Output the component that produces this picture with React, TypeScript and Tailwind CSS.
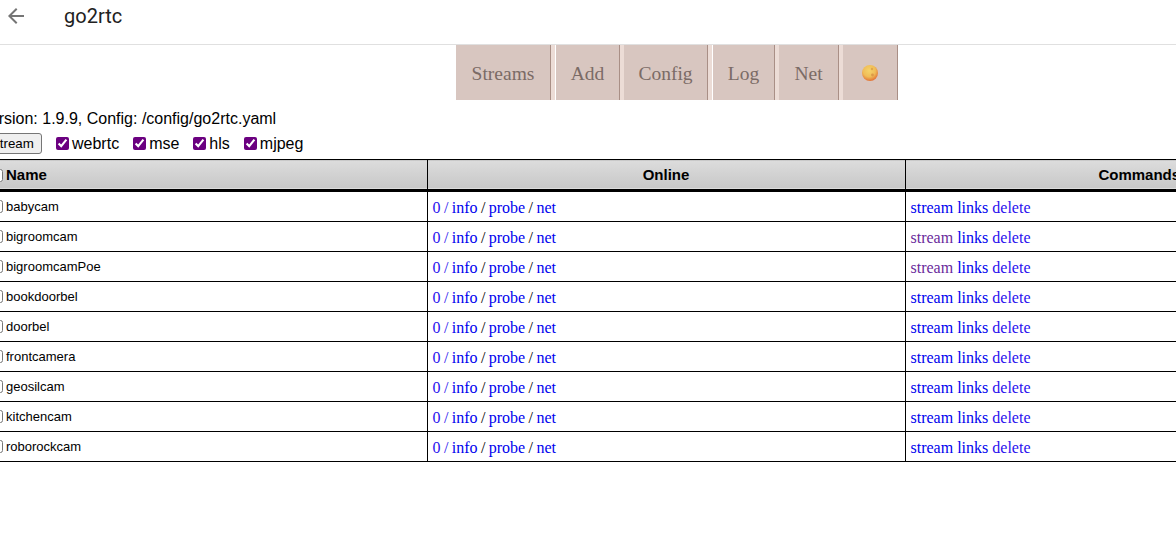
import React from "react";

const streams = ["babycam","bigroomcam","bigroomcamPoe","bookdoorbel","doorbel","frontcamera","geosilcam","kitchencam","roborockcam"];
const tabs = [
  { label: "Streams", cls: "w-[95px] mr-[5px]" },
  { label: "Add", cls: "w-[64px] mr-[4px]" },
  { label: "Config", cls: "w-[84px] mr-[5px]" },
  { label: "Log", cls: "w-[62px] mr-[4px]" },
  { label: "Net", cls: "w-[60px] mr-[4px]" },
];

function Moon() {
  return (
    <svg width="18" height="18" viewBox="0 0 18 18">
      <defs>
        <radialGradient id="m" cx="45%" cy="35%" r="70%">
          <stop offset="0%" stopColor="#f5d36a" />
          <stop offset="55%" stopColor="#f0bd58" />
          <stop offset="100%" stopColor="#e0652f" />
        </radialGradient>
      </defs>
      <circle cx="9" cy="9" r="8" fill="url(#m)" />
      <circle cx="11" cy="5" r="1.2" fill="#dfa64c" />
      <circle cx="11.5" cy="11" r="1.4" fill="#dc9a48" />
    </svg>
  );
}

function Check({ label }: { label: string }) {
  return (
    <label className="ml-[14px] flex items-center">
      <input type="checkbox" defaultChecked className="w-[13px] h-[13px] m-0 accent-[#6b0080]" />
      <span className="ml-[3px]">{label}</span>
    </label>
  );
}

export default function App() {
  return (
    <div className="w-[1176px] h-[538px] overflow-hidden bg-white font-['Liberation_Sans',sans-serif] text-black">
      <header className="h-[45px] border-b border-[#e0e0e0] flex items-start">
        <svg className="ml-[4px] mt-[4px]" width="24" height="24" viewBox="0 0 24 24" fill="#757575">
          <path d="M20 11H7.83l5.59-5.59L12 4l-8 8 8 8 1.41-1.41L7.83 13H20v-2z" />
        </svg>
        <span className="ml-[36px] mt-[4px] text-[20px] leading-[24px] text-[#212121] font-['Roboto',sans-serif]">go2rtc</span>
      </header>

      <nav className="flex pl-[456px] h-[55px] font-['Liberation_Serif',serif] text-[19.5px] text-[#7b6b66]">
        {tabs.map((t) => (
          <div key={t.label} className={`${t.cls} bg-[#d8c6c0] border-r border-[#a98f86] shadow-[4px_0_0_#ecdcd6] flex items-center justify-center pt-[2px]`}>
            {t.label}
          </div>
        ))}
        <div className="w-[55px] bg-[#d8c6c0] border-r border-[#a98f86] flex items-center justify-center">
          <Moon />
        </div>
      </nav>

      <div className="-ml-[20px] w-[1420px]">
        <div className="mt-[9px] h-[20px] text-[16px] leading-[20px]">Version: 1.9.9, Config: /config/go2rtc.yaml</div>
        <div className="ml-[5px] mt-[4px] h-[21px] flex items-center text-[16px]">
          <button className="w-[57px] h-[21px] bg-[#efefef] border border-[#767676] rounded-[3px] text-[13.33px] leading-none text-center">stream</button>
          <Check label="webrtc" />
          <Check label="mse" />
          <Check label="hls" />
          <Check label="mjpeg" />
        </div>

        <table className="ml-[5px] mt-[5px] w-[1388px] table-fixed border-collapse">
          <colgroup>
            <col className="w-[442px]" />
            <col className="w-[478px]" />
            <col className="w-[468px]" />
          </colgroup>
          <thead>
            <tr className="h-[31px] bg-gradient-to-b from-[#dcdcdc] to-[#c8c8c8] border-t border-b-[3px] border-black text-[15px]">
              <th className="border-r border-black pl-[5px] pt-[2px] text-left font-bold">
                <span className="flex items-center"><input type="checkbox" className="w-[13px] h-[13px] m-0" /><span className="ml-[3px]">Name</span></span>
              </th>
              <th className="border-r border-black pt-[2px] font-bold">Online</th>
              <th className="pt-[2px] font-bold">Commands</th>
            </tr>
          </thead>
          <tbody>
            {streams.map((s, i) => (
              <tr key={s} className={`${i === 0 ? "h-[31px]" : "h-[30px]"} border-b border-black`}>
                <td className="border-r border-black pl-[5px] text-[13px]">
                  <span className="flex items-center"><input type="checkbox" className="w-[13px] h-[13px] m-0" /><span className="ml-[3px]">{s}</span></span>
                </td>
                <td className="border-r border-black pl-[5px] pt-[2px] font-['Liberation_Serif',serif] text-[16px] [word-spacing:-0.6px]">
                  <span className="text-[#2a10ee]">0 / </span><span className="text-[#0000ee]">info</span> / <span className="text-[#0000ee]">probe</span> / <span className="text-[#0000ee]">net</span>
                </td>
                <td className="pl-[5px] pt-[2px] font-['Liberation_Serif',serif] text-[16px]">
                  {i === 1 || i === 2 ? <span className="text-[#6a2a9b]">stream</span> : <span className="text-[#0000ee]">stream</span>}{" "}
                  <span className="text-[#0000ee]">links</span> <span className="text-[#2a10ee]">delete</span>
                </td>
              </tr>
            ))}
          </tbody>
        </table>
      </div>
    </div>
  );
}
